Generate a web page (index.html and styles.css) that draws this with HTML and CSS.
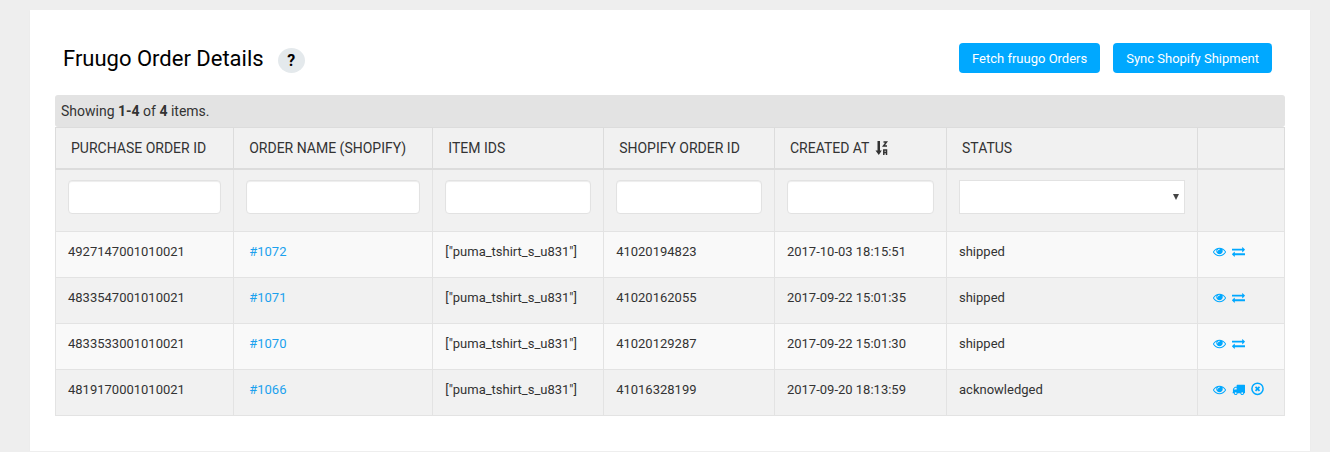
FILE: index.html
```html
<!DOCTYPE html>
<html lang="en">
<head>
    <meta charset="UTF-8">
    <meta name="viewport" content="width=device-width, initial-scale=1.0">
    <title>Fruugo Order Details</title>
    <link rel="stylesheet" href="styles.css">
</head>
<body>
    <svg class="sprite" aria-hidden="true">
        <symbol id="eye" viewBox="0 0 1792 1792"><path d="M1664 960q-152-236-381-353 61 104 61 225 0 185-131.500 316.500t-316.500 131.500-316.500-131.500-131.500-316.500q0-121 61-225-229 117-381 353 133 205 333.500 326.500t434.500 121.500 434.500-121.500 333.500-326.500zm-720-384q0-20-14-34t-34-14q-125 0-214.500 89.500t-89.500 214.500q0 20 14 34t34 14 34-14 14-34q0-86 61-147t147-61q20 0 34-14t14-34zm848 384q0 34-20 69-140 230-376.500 368.500t-499.500 138.500-499.500-139-376.500-368q-20-35-20-69t20-69q140-229 376.500-368t499.500-139 499.500 139 376.500 368q20 35 20 69z"/></symbol>
        <symbol id="exchange" viewBox="0 0 1792 1792"><path d="M1792 1184v192q0 13-9.500 22.500t-22.500 9.500h-1376v192q0 13-9.500 22.500t-22.500 9.500q-12 0-24-10l-319-320q-9-9-9-22 0-14 9-23l320-320q9-9 23-9 13 0 22.500 9.500t9.500 22.500v192h1376q13 0 22.500 9.500t9.500 22.500zm0-544q0 14-9 23l-320 320q-9 9-23 9-13 0-22.500-9.500t-9.500-22.500v-192h-1376q-13 0-22.500-9.500t-9.500-22.500v-192q0-13 9.500-22.500t22.500-9.500h1376v-192q0-14 9-23t23-9q12 0 24 10l319 319q9 9 9 23z"/></symbol>
        <symbol id="truck" viewBox="0 0 1792 1792"><path d="M640 1408q0-52-38-90t-90-38-90 38-38 90 38 90 90 38 90-38 38-90zm-384-512h384v-256h-158q-13 0-22 9l-195 195q-9 9-9 22v30zm1280 512q0-52-38-90t-90-38-90 38-38 90 38 90 90 38 90-38 38-90zm256-1088v1024q0 15-4 26.500t-13.500 18.500-16.500 11.500-23.500 6-22.500 2-25.500 0-22.500-.5q0 106-75 181t-181 75-181-75-75-181h-384q0 106-75 181t-181 75-181-75-75-181h-64q-3 0-22.500.5t-25.500 0-22.500-2-23.500-6-16.500-11.500-13.500-18.500-4-26.500q0-26 19-45t45-19v-320q0-8-.5-35t0-38 2.500-34.500 6.500-37 14-30.500 22.500-30l198-198q19-19 50.500-32t58.500-13h160v-192q0-26 19-45t45-19h1024q26 0 45 19t19 45z"/></symbol>
        <symbol id="cancel" viewBox="0 0 13 13"><circle cx="6.500" cy="5.800" r="5.600" fill="none" stroke="currentColor" stroke-width="1.500"/><path d="M4.500 3.800l4 4M8.500 3.800l-4 4" fill="none" stroke="currentColor" stroke-width="1.800"/></symbol>
        <symbol id="sort" viewBox="0 0 13 14"><path d="M2.500 0h2.500v9.500h1.800l-3 4.500-3.300-4.500h2z"/><path d="M8.500 1h3L8.500 5h3.500M8.800 14V9h2.700v5M8.800 11.500h2.700" fill="none" stroke="currentColor" stroke-width="1.500"/></symbol>
    </svg>
    <div class="card">
        <div class="header">
            <h1>Fruugo Order Details</h1>
            <button type="button" class="help">?</button>
            <div class="actions">
                <button type="button" class="btn">Fetch fruugo Orders</button>
                <button type="button" class="btn">Sync Shopify Shipment</button>
            </div>
        </div>
        <div class="summary">Showing <b>1-4</b> of <b>4</b> items.</div>
        <table class="orders">
            <colgroup>
                <col class="col-purchase">
                <col class="col-name">
                <col class="col-mid">
                <col class="col-mid">
                <col class="col-created">
                <col class="col-status">
                <col>
            </colgroup>
            <thead>
                <tr>
                    <th><a href="#">Purchase Order ID</a></th>
                    <th><a href="#">Order Name (Shopify)</a></th>
                    <th><a href="#">Item IDs</a></th>
                    <th><a href="#">Shopify Order ID</a></th>
                    <th><a href="#">Created At <svg class="sort"><use href="#sort"/></svg></a></th>
                    <th><a href="#">Status</a></th>
                    <th></th>
                </tr>
                <tr class="filters">
                    <td><input type="text" class="field" aria-label="Purchase Order ID"></td>
                    <td><input type="text" class="field" aria-label="Order Name (Shopify)"></td>
                    <td><input type="text" class="field" aria-label="Item IDs"></td>
                    <td><input type="text" class="field" aria-label="Shopify Order ID"></td>
                    <td><input type="text" class="field" aria-label="Created At"></td>
                    <td>
                        <div class="select-wrap">
                            <select class="field" aria-label="Status">
                                <option value=""></option>
                                <option value="acknowledged">acknowledged</option>
                                <option value="shipped">shipped</option>
                            </select>
                        </div>
                    </td>
                    <td></td>
                </tr>
            </thead>
            <tbody>
                <tr>
                    <td>4927147001010021</td>
                    <td><a class="order-link" href="#">#1072</a></td>
                    <td>["puma_tshirt_s_u831"]</td>
                    <td>41020194823</td>
                    <td>2017-10-03 18:15:51</td>
                    <td>shipped</td>
                    <td>
                        <div class="icons">
                            <a href="#" aria-label="View"><svg><use href="#eye"/></svg></a>
                            <a href="#" aria-label="Sync"><svg><use href="#exchange"/></svg></a>
                        </div>
                    </td>
                </tr>
                <tr>
                    <td>4833547001010021</td>
                    <td><a class="order-link" href="#">#1071</a></td>
                    <td>["puma_tshirt_s_u831"]</td>
                    <td>41020162055</td>
                    <td>2017-09-22 15:01:35</td>
                    <td>shipped</td>
                    <td>
                        <div class="icons">
                            <a href="#" aria-label="View"><svg><use href="#eye"/></svg></a>
                            <a href="#" aria-label="Sync"><svg><use href="#exchange"/></svg></a>
                        </div>
                    </td>
                </tr>
                <tr>
                    <td>4833533001010021</td>
                    <td><a class="order-link" href="#">#1070</a></td>
                    <td>["puma_tshirt_s_u831"]</td>
                    <td>41020129287</td>
                    <td>2017-09-22 15:01:30</td>
                    <td>shipped</td>
                    <td>
                        <div class="icons">
                            <a href="#" aria-label="View"><svg><use href="#eye"/></svg></a>
                            <a href="#" aria-label="Sync"><svg><use href="#exchange"/></svg></a>
                        </div>
                    </td>
                </tr>
                <tr>
                    <td>4819170001010021</td>
                    <td><a class="order-link" href="#">#1066</a></td>
                    <td>["puma_tshirt_s_u831"]</td>
                    <td>41016328199</td>
                    <td>2017-09-20 18:13:59</td>
                    <td>acknowledged</td>
                    <td>
                        <div class="icons">
                            <a href="#" aria-label="View"><svg><use href="#eye"/></svg></a>
                            <a href="#" aria-label="Ship"><svg><use href="#truck"/></svg></a>
                            <a href="#" aria-label="Cancel"><svg><use href="#cancel"/></svg></a>
                        </div>
                    </td>
                </tr>
            </tbody>
        </table>
    </div>
</body>
</html>
```

FILE: styles.css
```css
* {
    box-sizing: border-box;
}
body {
    margin: 0;
    padding: 10px 20px 0 30px;
    background-color: #eeeeee;
    color: #333;
    font-family: Roboto, sans-serif;
    font-size: 13px;
    line-height: 20px;
}
a {
    color: inherit;
    text-decoration: none;
}
svg {
    fill: currentColor;
}
.sprite {
    display: none;
}
.card {
    padding: 33px 25px 35px;
    background-color: #fff;
    box-shadow: 0 1px 1px rgba(0, 0, 0, 0.05);
}
.header {
    display: flex;
    align-items: flex-start;
    padding: 0 13px 0 8px;
    margin-bottom: 20px;
}
h1 {
    margin: 0 14px 0 0;
    color: #000;
    font-size: 22px;
    font-weight: 400;
    line-height: 32px;
}
.help {
    width: 27px;
    height: 25px;
    margin-top: 5px;
    padding: 0;
    border: none;
    border-radius: 50%;
    background-color: #e4e9ec;
    color: #000;
    font-family: inherit;
    font-size: 16px;
    font-weight: bold;
    cursor: pointer;
}
.actions {
    display: flex;
    gap: 13px;
    margin-left: auto;
}
.btn {
    height: 30px;
    padding: 0 13px;
    border: none;
    border-radius: 4px;
    background-color: #00a8ff;
    color: #fff;
    font-family: inherit;
    font-size: 13px;
    cursor: pointer;
}
.summary {
    padding: 6px;
    border-radius: 3px;
    background-color: #e3e3e3;
    font-size: 14px;
}
.orders {
    width: 100%;
    table-layout: fixed;
    border-collapse: collapse;
}
.col-purchase {
    width: 14.5%;
}
.col-name {
    width: 16.2%;
}
.col-mid {
    width: 13.9%;
}
.col-created {
    width: 14%;
}
.col-status {
    width: 20.4%;
}
.orders th,
.orders td {
    border: 1px solid #e3e3e3;
    text-align: left;
    vertical-align: top;
}
.orders th {
    padding: 10px 15px;
    border-color: #dcdcdc;
    border-bottom-width: 2px;
    background-color: #f1f1f1;
    font-size: 14px;
    font-weight: 400;
    text-transform: uppercase;
    white-space: nowrap;
}
.orders td {
    padding: 10px 12px 15px;
}
.orders .filters td {
    padding: 10px 12px 17px;
    background-color: #f1f1f1;
}
.orders tbody tr {
    background-color: #f9f9f9;
}
.orders tbody tr:nth-child(even) {
    background-color: #f1f1f1;
}
.field {
    display: block;
    width: 100%;
    height: 34px;
    padding: 6px 12px;
    border: 1px solid #e2e2e2;
    border-radius: 4px;
    background-color: #fff;
    box-shadow: inset 0 1px 1px rgba(0, 0, 0, 0.075);
    font-family: inherit;
    font-size: 13px;
}
.select-wrap {
    position: relative;
}
.select-wrap .field {
    appearance: none;
    border-radius: 0;
    box-shadow: none;
}
.select-wrap::after {
    content: "";
    position: absolute;
    top: 14px;
    right: 6px;
    border: 3px solid transparent;
    border-top: 6px solid #444;
    border-bottom: none;
    pointer-events: none;
}
.sort {
    width: 13px;
    height: 14px;
    margin-left: 2px;
    vertical-align: -2px;
}
.order-link {
    padding-left: 3px;
    color: #1ba1ee;
}
.icons {
    display: flex;
    align-items: center;
    gap: 6px;
    height: 18px;
    padding-left: 3px;
    color: #00a8ff;
}
.icons svg {
    display: block;
    width: 13px;
    height: 13px;
    overflow: visible;
}
#cancel {
    overflow: visible;
}
```
